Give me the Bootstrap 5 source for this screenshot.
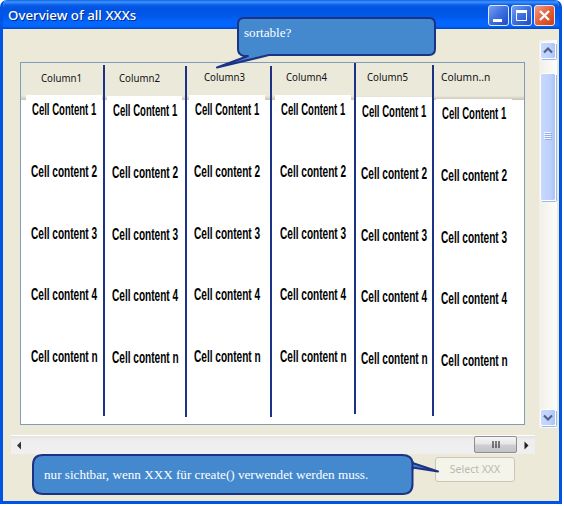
<!DOCTYPE html>
<html lang="de">
<head>
<meta charset="utf-8">
<title>Overview of all XXXs</title>
<link href="https://cdn.jsdelivr.net/npm/bootstrap@5.3.0/dist/css/bootstrap.min.css" rel="stylesheet">
<style>
body{background:#fff;overflow:hidden;font-family:"Noto Sans","Open Sans",sans-serif;line-height:1}
.win{width:562px;height:504px;background:#ece9d8;border:3px solid #0054e3;border-top:0;border-radius:7px 7px 0 0;overflow:hidden}
.titlebar{height:29px;margin:0 -3px;padding:5px 6px 0 8px;background:linear-gradient(#0f5fe0 0,#3d95ff 2px,#0a5ce8 5px,#0054e3 9px,#0058ea 16px,#0366ff 22px,#0366ff 26px,#0045c4 29px)}
.caption-text{font:500 13.300px/21px "Noto Sans",sans-serif;color:#fff;text-shadow:1px 1px #0a2a80;white-space:nowrap}
.tbs{gap:2px;padding-right:1px}
.tb{width:21px;height:21px;display:block}
.main-row{height:399px;padding:11px 2px 0 17px}
.grid-box{width:505px;height:363px;margin-top:22px;border:1px solid #7f9db9;background:linear-gradient(#ebe9da 0,#ebe9da 33px,#d8d4c4 35px,#c9c5b5 37px,#fff 37px)}
.colm{position:relative;flex:none;height:361px}
.rule::after{content:"";position:absolute;right:0;top:var(--t);width:2px;height:351px;background:#1c3284}
.head{height:32px;padding:var(--p) 0 0 var(--h);font:11px/12px "Noto Sans",sans-serif;color:#111;white-space:nowrap}
.head span,.cellt span{display:inline-block;transform-origin:0 50%}
.head span{transform:scaleX(.88)}
.colm:last-child .head span{transform:scaleX(.93)}
.patch{width:76px;background:#fff;margin-left:var(--m);padding-top:6px}
.colm:nth-child(2) .patch{width:75px}
.cellt{height:61.75px;padding-left:5px;font:bold 16px/18px "Liberation Sans",sans-serif;color:#000;white-space:nowrap}
.cellt span{transform:scaleX(.63)}
.cellt:first-child{padding-left:6px}
.cellt:first-child span{transform:scaleX(.597)}
.vbar{width:18px;height:388px;background:linear-gradient(90deg,#f1efe8,#fdfdfa);padding:1px 0}
.vbar svg,.hbar svg{display:block}
.hbar{width:524px;height:19px;margin:7px 0 0 8px;background:linear-gradient(#fff 0,#fff 1px,#e2e2e2 1px,#eee 5px,#f0f0f0)}
.sel{width:80px;height:25px;margin:3px 0 0 432px;padding:0;border:1px solid #c9c7ba;border-radius:3px;font:10.500px/23px "Noto Sans",sans-serif}
.sel.btn:disabled{opacity:1;color:#bab9ae;background:#f5f4ea;border-color:#c9c7ba}
.note{left:0;top:0}
.note-text{color:#fff;font:13.150px/16px "Liberation Serif",serif;white-space:nowrap}
.n1{left:244px;top:25px}
.n2{left:44px;top:467px}
</style>
</head>
<body>
<div class="win">
  <div class="titlebar d-flex justify-content-between">
    <span class="caption-text">Overview of all XXXs</span>
    <div class="tbs d-flex">
      <svg class="tb" viewBox="0 0 21 21"><defs>
        <linearGradient id="b" x2="1" y2="1"><stop stop-color="#7ba2ee"/><stop offset=".5" stop-color="#3c6fdf"/><stop offset="1" stop-color="#1c48c8"/></linearGradient>
        <linearGradient id="r" x2="1" y2="1"><stop stop-color="#f0a088"/><stop offset=".5" stop-color="#e2603c"/><stop offset="1" stop-color="#cc3c10"/></linearGradient></defs>
        <rect x=".5" y=".5" width="20" height="20" rx="2.5" fill="url(#b)" stroke="#dfe9fb"/><path d="M5 14h9v3H5z" fill="#fff"/></svg>
      <svg class="tb" viewBox="0 0 21 21"><rect x=".5" y=".5" width="20" height="20" rx="2.5" fill="url(#b)" stroke="#dfe9fb"/><path d="M5.5 6v9.500h10V6" fill="none" stroke="#fff"/><path d="M5 5h11v3H5z" fill="#fff"/></svg>
      <svg class="tb" viewBox="0 0 21 21"><rect x=".5" y=".5" width="20" height="20" rx="2.5" fill="url(#r)" stroke="#f6e4e4"/><path d="M6 6l9 9M15 6l-9 9" stroke="#fff" stroke-width="2.3"/></svg>
    </div>
  </div>

  <div class="main-row d-flex justify-content-between">
    <div class="grid-box d-flex" id="grid"></div>
    <div class="vbar">
      <svg width="18" height="386" viewBox="0 0 18 386"><defs>
        <linearGradient id="v" x2="1"><stop stop-color="#c9d9fd"/><stop offset=".6" stop-color="#bdd1fc"/><stop offset="1" stop-color="#a9c3f6"/></linearGradient></defs>
        <g fill="url(#v)" stroke="#fff"><rect x="1.500" y="1.500" width="15" height="16" rx="2"/><rect x="1.500" y="32.500" width="15" height="127" rx="2"/><rect x="1.500" y="368.500" width="15" height="16" rx="2"/></g>
        <g fill="none" stroke="#9db8ec"><path d="M3 18.500h13.500q1 0 1-1V3M3 160.500h13.500q1 0 1-1V34M3 385.500h13.500q1 0 1-1V370"/></g>
        <g fill="none" stroke="#4d6185" stroke-width="2.200"><path d="M5 11.500l4-4 4 4M5 374.500l4 4 4-4"/></g>
        <path d="M5 91.500h7M5 93.500h7M5 95.500h7M5 97.500h7" stroke="#f3f7ff"/><path d="M6 92.500h7M6 94.500h7M6 96.500h7M6 98.500h7" stroke="#8fb0f0"/>
      </svg>
    </div>
  </div>

  <div class="hbar">
    <svg width="524" height="19" viewBox="0 0 524 19"><defs><linearGradient id="h" y2="1" x2="0"><stop stop-color="#f6f6f6"/><stop offset=".48" stop-color="#e6e6e8"/><stop offset=".52" stop-color="#cfcfd2"/><stop offset="1" stop-color="#c2c2c6"/></linearGradient></defs>
      <path d="M6 10.500l4-4v8z" fill="#333"/><path d="M517.500 10.500l-4-4v8z" fill="#222"/>
      <rect x="463.500" y="1.500" width="42" height="16" rx="1.500" fill="url(#h)" stroke="#8e8f92"/>
      <path d="M482 6v7M485 6v7M488 6v7" stroke="#555" stroke-width="1.500"/>
    </svg>
  </div>
  <button class="btn sel d-block" disabled>Select XXX</button>
</div>

<svg class="note position-absolute" width="562" height="504" viewBox="0 0 562 504">
  <g fill="#4489ce" stroke="#1c3284" stroke-width="2" stroke-linejoin="round">
    <path d="M244 18H429q6 0 6 6V49q0 6-6 6H269L217 67.500 248 56H244q-6-1-6-7V24q0-6 6-6z"/>
    <path d="M43 455H402q10 0 10.500 8L438 471.500 412.500 467.500V484q0 10-10 10H43q-10 0-10-10V465q0-10 10-10z"/>
    <path d="M412.500 461V470" fill="none"/>
  </g>
</svg>
<span class="note-text n1 position-absolute">sortable?</span>
<span class="note-text n2 position-absolute">nur sichtbar, wenn XXX für create() verwendet werden muss.</span>

<script>
// name, width, header indent, header top, patch indent, vertical shift, top of the rule
const cols=[["Column1",84,20,9,5,0,2],["Column2",82,14,9,2,1,3],["Column3",85,17,8,2,0,3],["Column4",84,14,8,3,0,0],["Column5",78,11,8,0,2,2],["Column..n",90,7,8,2,4,null]];
const rows=["Cell Content 1","Cell content 2","Cell content 3","Cell content 4","Cell content n"];
document.getElementById("grid").innerHTML=cols.map(([n,w,h,p,m,s,t])=>
 `<div class="colm ${t===null?"":"rule"}" style="width:${w}px;--h:${h}px;--p:${p}px;--m:${m}px;--t:${t}px"><div class="head" style="height:${32+s}px"><span>${n}</span></div><div class="patch" style="height:${320-s}px">${rows.map(r=>`<div class="cellt"><span>${r}</span></div>`).join("")}</div></div>`).join("");
</script>
<script src="https://cdn.jsdelivr.net/npm/bootstrap@5.3.0/dist/js/bootstrap.bundle.min.js"></script>
</body>
</html>
